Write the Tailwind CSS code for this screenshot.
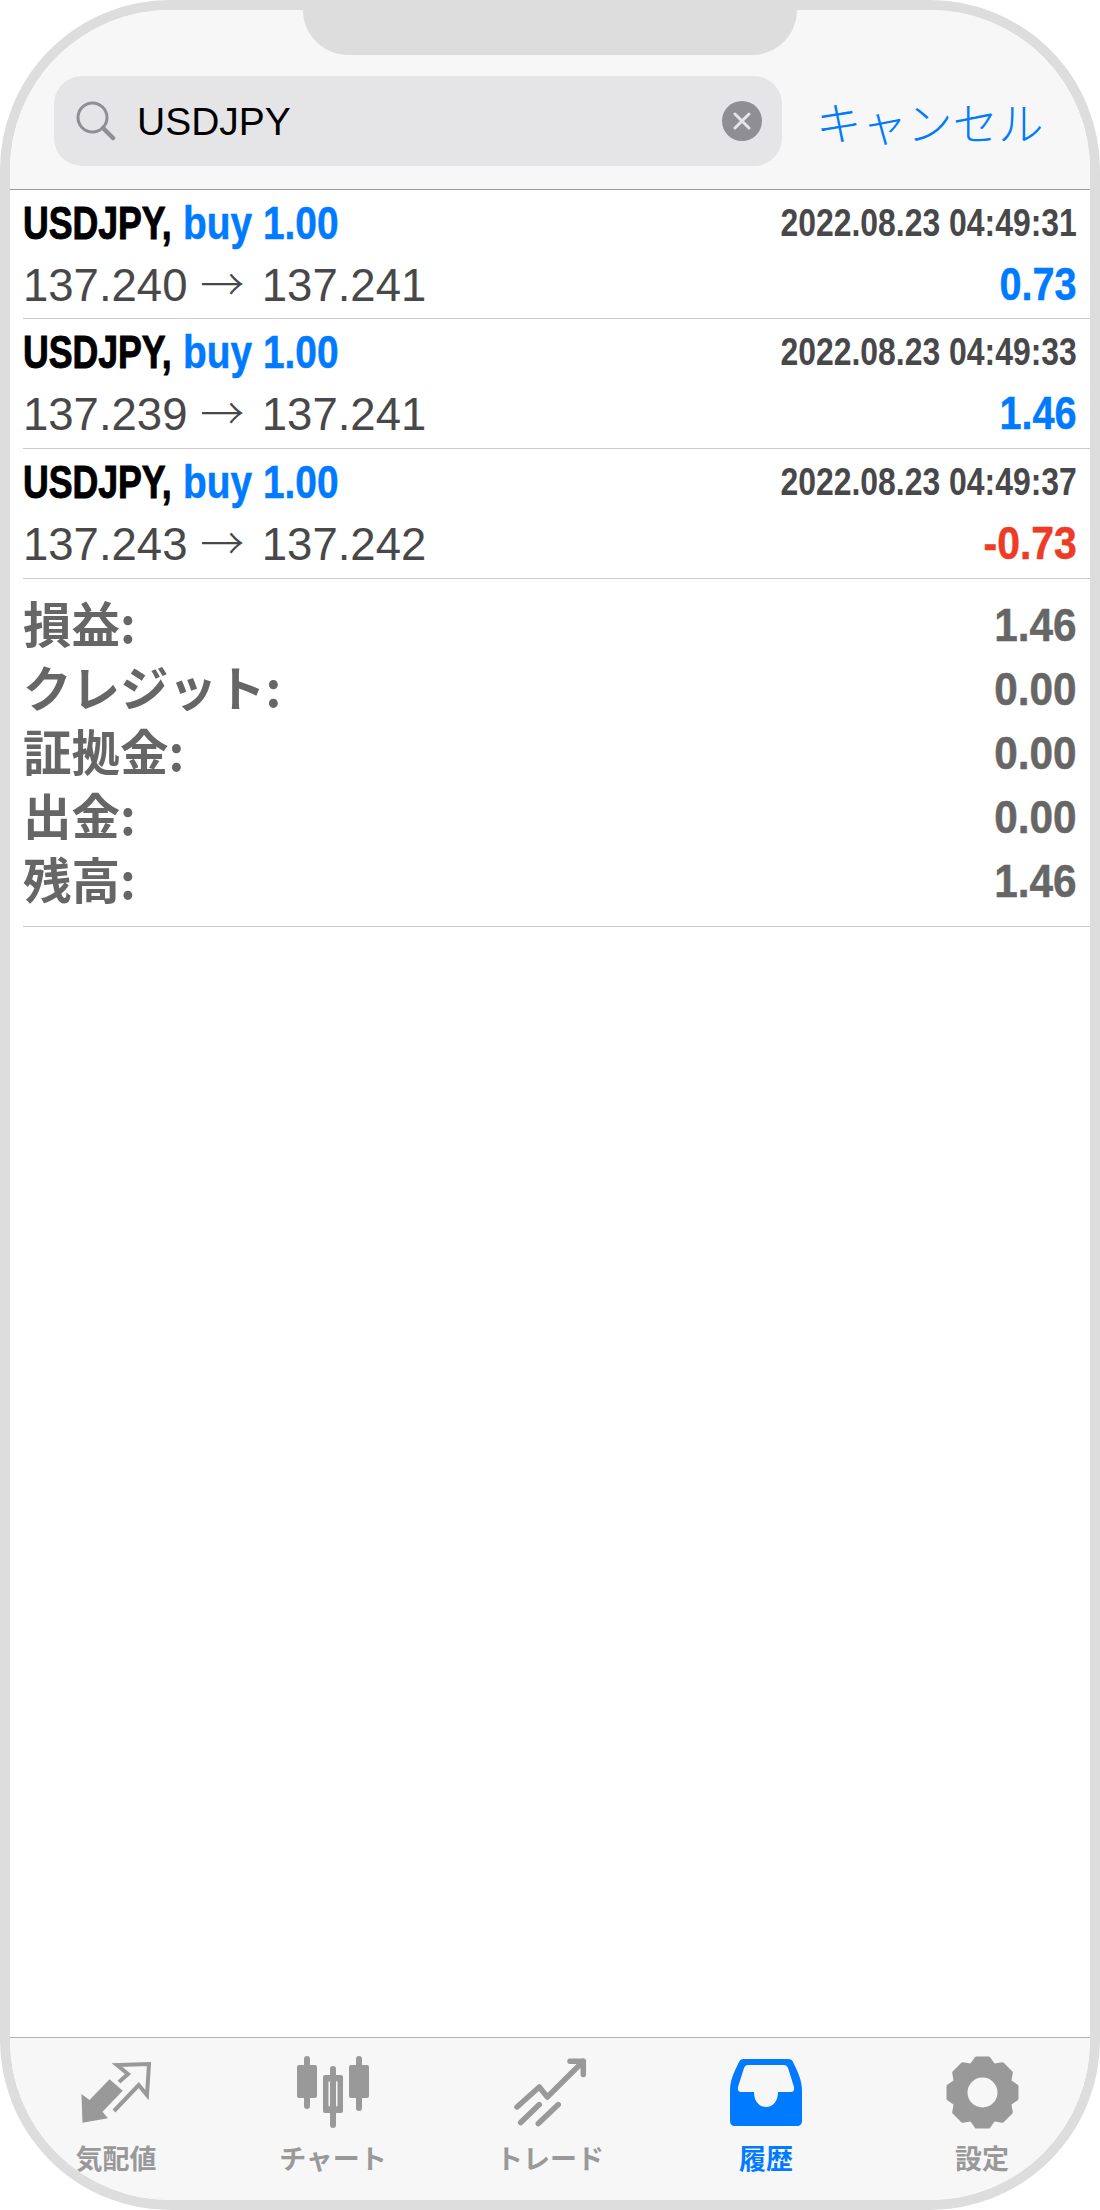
<!DOCTYPE html>
<html lang="ja">

<head>
    <meta charset="UTF-8">
    <meta name="viewport" content="width=device-width, initial-scale=1.0">
    <title>履歴</title>
    <script src="https://cdn.jsdelivr.net/npm/@tailwindcss/browser@4"></script>
</head>

<body class="bg-white font-['Liberation_Sans','Noto_Sans_CJK_JP',sans-serif]">
    <!-- phone frame -->
    <div class="relative w-[1100px] h-[2210px] border-[10px] border-[#dddddd] rounded-[170px] overflow-hidden bg-white flex flex-col">
        <!-- notch -->
        <div class="absolute left-[293px] top-0 w-[494px] h-[45px] bg-[#dddddd] rounded-b-[45px]"></div>

        <!-- search header -->
        <div class="h-[180px] shrink-0 bg-[#f7f7f7] border-b border-[#999999] pt-[66px] pl-[44px] flex items-start">
            <div class="w-[728px] h-[90px] bg-[#e5e5e8] rounded-[28px] flex items-center pl-[22px] pr-[20px]">
                <svg class="w-[40px] h-[40px] shrink-0" viewBox="0 0 40 40" fill="none" stroke="#8e8e93">
                    <circle cx="16.5" cy="16.5" r="14.5" stroke-width="3"></circle>
                    <path d="M27 27L37 37" stroke-width="4.5" stroke-linecap="round"></path>
                </svg>
                <span class="ml-[21px] text-[39px] leading-none text-black">USDJPY</span>
                <span class="ml-auto w-[40px] h-[40px] rounded-full bg-[#8e8e93] flex items-center justify-center">
                    <svg class="w-[18px] h-[18px]" viewBox="0 0 18 18" fill="none" stroke="#e5e5e8" stroke-width="3" stroke-linecap="round">
                        <path d="M2 2L16 16M16 2L2 16"></path>
                    </svg>
                </span>
            </div>
            <span class="ml-[34px] h-[90px] flex items-center text-[45.5px] text-[#007aff] font-['Noto_Sans_CJK_JP',sans-serif] font-light">キャンセル</span>
        </div>

        <!-- deals -->
        <div class="pl-[13px]">
            <div class="h-[129px] border-b border-[#cccccc] pr-[13px]">
                <div class="flex justify-between items-center h-[66px]">
                    <div class="flex items-center">
                        <span class="w-[160px] text-[46px] font-bold text-black leading-none origin-left scale-x-[0.775] whitespace-nowrap [-webkit-text-stroke:1px_black]">USDJPY,</span>
                        <span class="text-[46px] font-bold text-[#007aff] leading-none origin-left scale-x-[0.845] whitespace-nowrap [-webkit-text-stroke:0.5px_#007aff]">buy 1.00</span>
                    </div>
                    <span class="text-[38px] font-bold text-[#48484a] leading-none origin-right scale-x-[0.84] whitespace-nowrap">2022.08.23 04:49:31</span>
                </div>
                <div class="flex justify-between items-center h-[56px]">
                    <span class="text-[45.5px] text-[#48484a] leading-none whitespace-nowrap">137.240 <span class="mr-[5px] font-['Noto_Sans_CJK_JP',sans-serif] font-light text-[44px]">→</span> 137.241</span>
                    <span class="text-[46px] font-bold text-[#007aff] leading-none origin-right scale-x-[0.86] [-webkit-text-stroke:0.5px_#007aff]">0.73</span>
                </div>
            </div>
            <div class="h-[130px] border-b border-[#cccccc] pr-[13px]">
                <div class="flex justify-between items-center h-[66px]">
                    <div class="flex items-center">
                        <span class="w-[160px] text-[46px] font-bold text-black leading-none origin-left scale-x-[0.775] whitespace-nowrap [-webkit-text-stroke:1px_black]">USDJPY,</span>
                        <span class="text-[46px] font-bold text-[#007aff] leading-none origin-left scale-x-[0.845] whitespace-nowrap [-webkit-text-stroke:0.5px_#007aff]">buy 1.00</span>
                    </div>
                    <span class="text-[38px] font-bold text-[#48484a] leading-none origin-right scale-x-[0.84] whitespace-nowrap">2022.08.23 04:49:33</span>
                </div>
                <div class="flex justify-between items-center h-[56px]">
                    <span class="text-[45.5px] text-[#48484a] leading-none whitespace-nowrap">137.239 <span class="mr-[5px] font-['Noto_Sans_CJK_JP',sans-serif] font-light text-[44px]">→</span> 137.241</span>
                    <span class="text-[46px] font-bold text-[#007aff] leading-none origin-right scale-x-[0.86] [-webkit-text-stroke:0.5px_#007aff]">1.46</span>
                </div>
            </div>
            <div class="h-[130px] border-b border-[#cccccc] pr-[13px]">
                <div class="flex justify-between items-center h-[66px]">
                    <div class="flex items-center">
                        <span class="w-[160px] text-[46px] font-bold text-black leading-none origin-left scale-x-[0.775] whitespace-nowrap [-webkit-text-stroke:1px_black]">USDJPY,</span>
                        <span class="text-[46px] font-bold text-[#007aff] leading-none origin-left scale-x-[0.845] whitespace-nowrap [-webkit-text-stroke:0.5px_#007aff]">buy 1.00</span>
                    </div>
                    <span class="text-[38px] font-bold text-[#48484a] leading-none origin-right scale-x-[0.84] whitespace-nowrap">2022.08.23 04:49:37</span>
                </div>
                <div class="flex justify-between items-center h-[56px]">
                    <span class="text-[45.5px] text-[#48484a] leading-none whitespace-nowrap">137.243 <span class="mr-[5px] font-['Noto_Sans_CJK_JP',sans-serif] font-light text-[44px]">→</span> 137.242</span>
                    <span class="text-[46px] font-bold text-[#ee3b26] leading-none origin-right scale-x-[0.89] [-webkit-text-stroke:0.5px_#ee3b26]">-0.73</span>
                </div>
            </div>

            <!-- totals -->
            <div class="h-[348px] border-b border-[#cccccc] pr-[13px] pt-[13px] text-[#666666]">
                <div class="flex justify-between items-center h-[64px]">
                    <span class="text-[48.5px] font-bold leading-none -mt-[4px] font-['Noto_Sans_CJK_JP',sans-serif]">損益:</span>
                    <span class="text-[46px] font-bold leading-none mt-[2px] origin-right scale-x-[0.92] [-webkit-text-stroke:0.5px_#666666]">1.46</span>
                </div>
                <div class="flex justify-between items-center h-[64px]">
                    <span class="text-[48.5px] font-bold leading-none -mt-[4px] font-['Noto_Sans_CJK_JP',sans-serif]">クレジット:</span>
                    <span class="text-[46px] font-bold leading-none mt-[2px] origin-right scale-x-[0.92] [-webkit-text-stroke:0.5px_#666666]">0.00</span>
                </div>
                <div class="flex justify-between items-center h-[64px]">
                    <span class="text-[48.5px] font-bold leading-none -mt-[4px] font-['Noto_Sans_CJK_JP',sans-serif]">証拠金:</span>
                    <span class="text-[46px] font-bold leading-none mt-[2px] origin-right scale-x-[0.92] [-webkit-text-stroke:0.5px_#666666]">0.00</span>
                </div>
                <div class="flex justify-between items-center h-[64px]">
                    <span class="text-[48.5px] font-bold leading-none -mt-[4px] font-['Noto_Sans_CJK_JP',sans-serif]">出金:</span>
                    <span class="text-[46px] font-bold leading-none mt-[2px] origin-right scale-x-[0.92] [-webkit-text-stroke:0.5px_#666666]">0.00</span>
                </div>
                <div class="flex justify-between items-center h-[64px]">
                    <span class="text-[48.5px] font-bold leading-none -mt-[4px] font-['Noto_Sans_CJK_JP',sans-serif]">残高:</span>
                    <span class="text-[46px] font-bold leading-none mt-[2px] origin-right scale-x-[0.92] [-webkit-text-stroke:0.5px_#666666]">1.46</span>
                </div>
            </div>
        </div>

        <div class="flex-1"></div>

        <!-- tab bar -->
        <div class="h-[163px] shrink-0 bg-[#f7f7f7] border-t border-[#b3b3b3] grid grid-cols-5 font-['Noto_Sans_CJK_JP',sans-serif] font-bold text-[27px] text-[#999999]">
            <div class="flex flex-col items-center pr-[4px]">
                <div class="h-[92px] pt-[24px]">
                    <svg class="w-[70px] h-[62px]" viewBox="0 0 70 62" fill="#999999">
                        <path d="M0.4 32L8.5 38L28.5 17.3L41.8 28.7L21.5 49.7L27 56.3L1.5 60.7Z"></path>
                        <path d="M38 20L47 12L36 3L68 2L66 33L57.7 23L33 49" fill="none" stroke="#999999" stroke-width="4"></path>
                    </svg>
                </div>
                <span class="leading-none mt-[14px]">気配値</span>
            </div>
            <div class="flex flex-col items-center pr-[2px]">
                <div class="h-[92px] pt-[18px]">
                    <svg class="w-[72px] h-[72px]" viewBox="0 0 72 72" fill="#999999">
                        <rect x="7" y="0" width="6" height="53" rx="3"></rect>
                        <rect x="0" y="9" width="20" height="33" rx="2"></rect>
                        <rect x="33" y="10" width="6" height="62" rx="3"></rect>
                        <path fill-rule="evenodd" d="M28 19H44a2 2 0 0 1 2 2V55a2 2 0 0 1-2 2H28a2 2 0 0 1-2-2V21a2 2 0 0 1 2-2ZM33 25a1.500 1.500 0 0 0-1.500 1.500V49a1.500 1.500 0 0 0 1.500 1.500H39a1.500 1.500 0 0 0 1.500-1.500V26.500A1.500 1.500 0 0 0 39 25Z"></path>
                        <rect x="59" y="0" width="6" height="55" rx="3"></rect>
                        <rect x="52" y="9" width="20" height="33" rx="2"></rect>
                    </svg>
                </div>
                <span class="leading-none mt-[14px]">チャート</span>
            </div>
            <div class="flex flex-col items-center">
                <div class="h-[92px] pt-[20px]">
                    <svg class="w-[73px] h-[70px]" viewBox="0 0 73 70" fill="none" stroke="#999999" stroke-width="5.500" stroke-linecap="round" stroke-linejoin="round">
                        <path d="M3 49L25.300 29L33.300 39L69.300 3.300"></path>
                        <path d="M56 3.300H69.300V16.600"></path>
                        <path d="M25.300 46.600L6.700 64.600"></path>
                        <path d="M44.300 46.600L24.300 65.600"></path>
                    </svg>
                </div>
                <span class="leading-none mt-[14px]">トレード</span>
            </div>
            <div class="flex flex-col items-center text-[#007aff]">
                <div class="h-[92px] pt-[21px]">
                    <svg class="w-[72px] h-[68px]" viewBox="0 0 72 68" fill="#007aff">
                        <path fill-rule="evenodd" d="M14 0H58C61 0 62 1 63 3C68 13 72 21 72 32V62C72 65 70 67 67 67H5C2 67 0 65 0 62V32C0 21 4 13 9 3C10 1 11 0 14 0ZM18 6C16 6 15 7 14 9L8 28C7.500 31 8.500 33 11 33H24C24 42 29 48 36 48C43 48 48 42 48 33H61C63.500 33 64.500 31 64 28L58 9C57 7 56 6 54 6Z"></path>
                    </svg>
                </div>
                <span class="leading-none mt-[14px]">履歴</span>
            </div>
            <div class="flex flex-col items-center">
                <div class="h-[92px] pt-[18px]">
                    <svg class="w-[73px] h-[73px]" viewBox="0 0 73 73">
                        <polygon fill="#999999" stroke="#999999" stroke-width="4" stroke-linejoin="round" points="30.500,2.500 42.500,2.500 47.600,9.700 56.300,8.200 64.800,16.700 63.300,25.400 70.500,30.500 70.500,42.500 63.300,47.600 64.800,56.300 56.300,64.800 47.600,63.300 42.500,70.500 30.500,70.500 25.400,63.300 16.700,64.800 8.200,56.300 9.700,47.600 2.500,42.500 2.500,30.500 9.700,25.400 8.200,16.700 16.700,8.200 25.400,9.700"></polygon>
                        <circle cx="36.500" cy="36.500" r="15" fill="#f7f7f7"></circle>
                    </svg>
                </div>
                <span class="leading-none mt-[14px]">設定</span>
            </div>
        </div>
    </div>
</body>

</html>
